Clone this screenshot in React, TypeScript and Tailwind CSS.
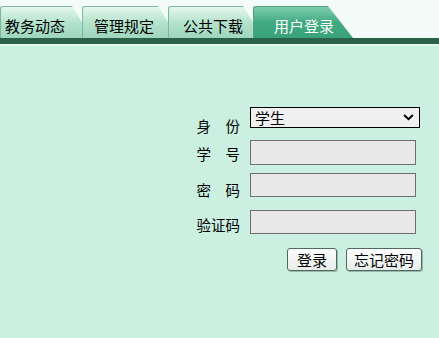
import React, { useState } from "react";

const TABS = [
  { label: "教务动态", w: "w-[82px]", pl: "pl-[4px]" },
  { label: "管理规定", w: "w-[86px]", pl: "pl-[11px]" },
  { label: "公共下载", w: "w-[85px]", pl: "pl-[14px]" },
];

const font = { fontFamily: '"Noto Sans CJK SC", "Noto Sans", sans-serif' };

export default function App() {
  const [role, setRole] = useState("学生");

  return (
    <div className="w-[439px] h-[338px] bg-[#cbefe0] overflow-hidden" style={font}>
      {/* Tab strip */}
      <div className="bg-[#f4fcf9] pt-[6px]">
        <div className="flex items-end h-[32px]">
          {TABS.map((t) => (
            <div
              key={t.label}
              className={`${t.w} h-[32px] shrink-0 rounded-tl-[3px] bg-gradient-to-b from-[#e4f7ee] via-[#b4e3cd] to-[#9fd6bd] border-l border-t border-[#7fb79d] [clip-path:polygon(0_0,calc(100%-10px)_0,100%_16px,100%_100%,0_100%)] ${t.pl} flex items-end pb-[2px] text-[15px] leading-[20px] text-black`}
            >
              {t.label}
            </div>
          ))}
          <div className="w-[100px] h-[32px] shrink-0 rounded-tl-[3px] bg-gradient-to-b from-[#7ccfad] via-[#41aa83] to-[#3aa27b] border-l border-t border-[#5a9e82] [clip-path:polygon(0_0,calc(100%-25px)_0,100%_100%,0_100%)] pl-[20px] flex items-end pb-[2px] text-[15px] leading-[20px] text-white">
            用户登录
          </div>
        </div>
        <div className="h-[6px] bg-[#2b6049]" />
        <div className="h-[2px] bg-[#e0f5ec]" />
      </div>

      {/* Login form */}
      <div className="flex flex-col items-end pr-[19px] pt-[61px] text-[14.5px] text-black">
        <div className="flex items-start h-[33px]">
          <span className="shrink-0 mr-[10px] pt-[11px] leading-[16px] whitespace-pre">身　份</span>
          <div className="relative w-[170px] h-[21px] shrink-0">
            <select
              value={role}
              onChange={(e) => setRole(e.target.value)}
              className="appearance-none w-full h-full border border-black bg-[#f0f0f0] text-[15px] leading-[19px] pl-[4px] outline-none"
              style={font}
            >
              <option>学生</option>
              <option>教师</option>
            </select>
            <svg
              viewBox="0 0 12 8"
              className="absolute right-[6px] top-[7px] w-[11px] h-[7px] pointer-events-none"
            >
              <path d="M1 1.2 L6 6 L11 1.2" fill="none" stroke="black" strokeWidth="2.2" />
            </svg>
          </div>
        </div>
        <div className="flex items-start h-[33px] pr-[4px]">
          <span className="shrink-0 mr-[10px] pt-[6px] leading-[16px] whitespace-pre">学　号</span>
          <input className="w-[166px] h-[25px] shrink-0 border border-[#6f6f6f] bg-[#e8e8e8] outline-none" />
        </div>
        <div className="flex items-start h-[37px] pr-[4px]">
          <span className="shrink-0 mr-[10px] pt-[9px] leading-[16px] whitespace-pre">密　码</span>
          <input type="password" className="w-[166px] h-[24px] shrink-0 border border-[#6f6f6f] bg-[#e8e8e8] outline-none" />
        </div>
        <div className="flex items-start h-[38px] pr-[4px]">
          <span className="shrink-0 mr-[10px] pt-[7px] leading-[16px] whitespace-pre">验证码</span>
          <input className="w-[166px] h-[24px] shrink-0 border border-[#6f6f6f] bg-[#e8e8e8] outline-none" />
        </div>
        <div className="flex gap-[9px] -mr-[2px]">
          <button className="w-[50px] h-[23px] rounded-[3px] border border-[#4d6b5e] bg-gradient-to-b from-white to-[#e6ece9] shadow-[1px_1px_0_#9bb8aa] text-[15px] leading-[19px]">
            登录
          </button>
          <button className="w-[76px] h-[23px] rounded-[3px] border border-[#4d6b5e] bg-gradient-to-b from-white to-[#e6ece9] shadow-[1px_1px_0_#9bb8aa] text-[15px] leading-[19px]">
            忘记密码
          </button>
        </div>
      </div>
    </div>
  );
}
